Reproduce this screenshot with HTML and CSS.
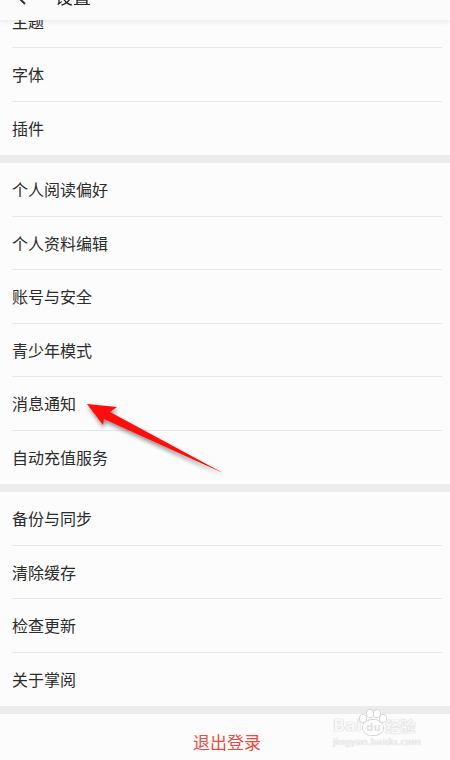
FILE: index.html
```html
<!DOCTYPE html>
<html lang="zh">
<head>
<meta charset="utf-8">
<title>设置</title>
<link rel="stylesheet" href="styles.css">
</head>
<body>
<header class="topbar">
  <span class="back">
    <svg width="12" height="20" viewBox="0 0 12 20"><path d="M10 2 L2 10 L10 18" fill="none" stroke="#333" stroke-width="2"/></svg>
  </span>
  <span class="title">设置</span>
</header>
<main class="list">
  <section class="group">
    <div class="row"><span>主题</span></div>
    <div class="row"><span>字体</span></div>
    <div class="row"><span>插件</span></div>
  </section>
  <section class="group">
    <div class="row"><span>个人阅读偏好</span></div>
    <div class="row"><span>个人资料编辑</span></div>
    <div class="row"><span>账号与安全</span></div>
    <div class="row"><span>青少年模式</span></div>
    <div class="row"><span>消息通知</span></div>
    <div class="row"><span>自动充值服务</span></div>
  </section>
  <section class="group">
    <div class="row"><span>备份与同步</span></div>
    <div class="row"><span>清除缓存</span></div>
    <div class="row"><span>检查更新</span></div>
    <div class="row"><span>关于掌阅</span></div>
  </section>
  <section class="group logout">退出登录</section>
</main>
<svg class="arrow" width="160" height="90" viewBox="0 0 160 90">
  <defs>
    <filter id="sh" x="-20%" y="-20%" width="140%" height="160%">
      <feDropShadow dx="1" dy="3" stdDeviation="2" flood-color="#000" flood-opacity="0.45"/>
    </filter>
  </defs>
  <polygon filter="url(#sh)" fill="#ff0a0a" points="7,9 37,12 30,17 143,78 24,24 23,30"/>
</svg>
<div class="watermark">
  <div class="wm-logo"><span>Bai</span><span class="paw"><i class="t1"></i><i class="t2"></i><i class="t3"></i><i class="t4"></i><b>du</b></span><span class="wm-cn">经验</span></div>
  <div class="wm-url">jingyan.baidu.com</div>
</div>
</body>
</html>
```
FILE: styles.css
```css
html, body {
  margin: 0;
  padding: 0;
}
body {
  width: 450px;
  height: 760px;
  overflow: hidden;
  background: #ececec;
  font-family: "Noto Sans CJK SC", "Noto Sans", sans-serif;
  color: #2b2b2b;
  position: relative;
}
.topbar {
  position: fixed;
  top: -28px;
  left: 0;
  right: 0;
  height: 48px;
  background: #fbfbfb;
  box-shadow: 0 2px 5px rgba(0,0,0,0.07);
  display: flex;
  align-items: center;
  z-index: 5;
}
.back {
  display: flex;
  margin-left: 15px;
  width: 40px;
}
.title {
  font-size: 18px;
  color: #222;
}
.list {
  margin-top: -5.5px;
  display: flex;
  flex-direction: column;
  gap: 8px;
}
.group {
  background: #fcfcfc;
}
.row {
  height: 53.5px;
  margin: 0 8px 0 12px;
  display: flex;
  align-items: center;
  font-size: 16px;
  box-sizing: border-box;
  border-bottom: 1px solid #e7e7e7;
}
.row:last-child {
  border-bottom: none;
}
.logout {
  height: 54px;
  display: flex;
  align-items: center;
  justify-content: center;
  color: #ea4b43;
  font-size: 17px;
  padding-left: 4px;
}
.arrow {
  position: absolute;
  left: 80px;
  top: 395px;
  z-index: 6;
}
.watermark {
  position: absolute;
  left: 333px;
  top: 713px;
  z-index: 7;
  color: rgba(255,255,255,0.9);
  font-family: "DejaVu Sans", sans-serif;
  text-shadow: 0 0 1px #c8c8c8, 0 0 1px #c8c8c8;
}
.wm-logo {
  display: flex;
  align-items: flex-end;
  font-size: 16px;
  font-weight: bold;
  line-height: 18px;
  height: 22px;
}
.paw {
  position: relative;
  display: inline-flex;
  align-items: center;
  justify-content: center;
  width: 20px;
  height: 15px;
  margin: 0 2px;
  border-radius: 50% 50% 45% 45%;
  background: rgba(255,255,255,0.85);
  box-shadow: 0 0 0 1px #d4d4d4;
}
.paw b {
  font-size: 10px;
  color: #e2e2e2;
  text-shadow: none;
}
.paw i {
  position: absolute;
  width: 6px;
  height: 7px;
  border-radius: 50%;
  background: rgba(255,255,255,0.9);
  box-shadow: 0 0 0 1px #d4d4d4;
}
.paw .t1 { left: -3px; top: -5px; }
.paw .t2 { left: 4px; top: -10px; }
.paw .t3 { left: 11px; top: -10px; }
.paw .t4 { left: 17px; top: -5px; }
.wm-cn {
  font-family: "Noto Sans CJK SC", sans-serif;
  font-size: 15px;
  font-weight: bold;
}
.wm-url {
  font-size: 9.5px;
  line-height: 12px;
  margin-top: 1px;
}
```
